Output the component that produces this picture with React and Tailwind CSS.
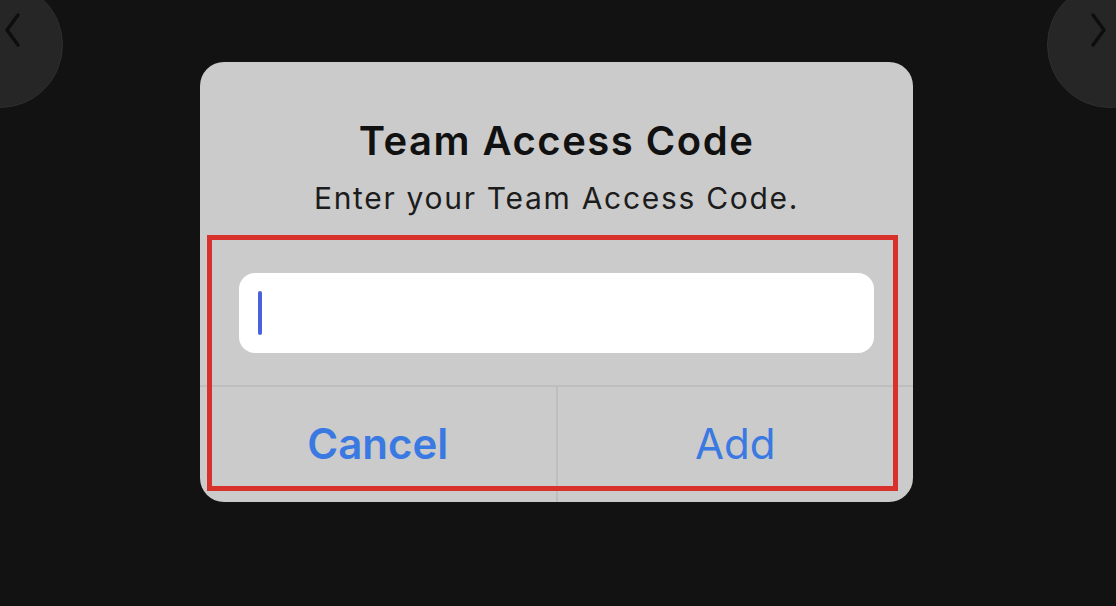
export default function App() {
  return (
    <div className="relative h-[606px] w-full overflow-hidden bg-[#121212] flex justify-center pt-[62px] font-['Inter',sans-serif]">
      {/* side nav buttons, partly off screen */}
      <div className="absolute left-[-63px] top-[-18px] h-[126px] w-[126px] rounded-full bg-[#262626] border border-[#2e2e2e]">
        <svg className="absolute left-[64px] top-[28px]" width="20" height="38" viewBox="0 0 20 38" fill="none">
          <path d="M16 4 L5 19 L16 34" stroke="#0e0e0e" strokeWidth="3.5" strokeLinecap="round" strokeLinejoin="round" />
        </svg>
      </div>
      <div className="absolute right-[-57px] top-[-18px] h-[126px] w-[126px] rounded-full bg-[#262626] border border-[#2e2e2e]">
        <svg className="absolute left-[41px] top-[28px]" width="20" height="38" viewBox="0 0 20 38" fill="none">
          <path d="M4 4 L15 19 L4 34" stroke="#0e0e0e" strokeWidth="3.5" strokeLinecap="round" strokeLinejoin="round" />
        </svg>
      </div>

      <div className="relative mr-[3px] w-[713px] h-[440px] rounded-[24px] bg-[#cbcbcb] flex flex-col items-center">
        <div className="mt-[56px] h-[46px] leading-[46px] text-[40px] font-semibold text-[#111] tracking-[1.5px]">
          Team Access Code
        </div>
        <div className="mt-[17px] h-[34px] leading-[34px] text-[30px] text-[#1c1c1c] tracking-[1.7px]">
          Enter your Team Access Code.
        </div>
        <div className="mt-[58px] w-[635px] h-[80px] rounded-[16px] bg-white flex items-center px-[19px]">
          <div className="w-[4px] h-[44px] rounded-full bg-[#4a62de]" />
        </div>
        <div className="mt-[32px] w-full flex-1 border-t-2 border-[#bebebe] flex">
          <button className="flex-1 flex items-center justify-center text-[42px] font-semibold text-[#3a79e2] pb-[2px]">
            Cancel
          </button>
          <div className="w-[2px] bg-[#bebebe]" />
          <button className="flex-1 flex items-center justify-center text-[42px] text-[#3a79e2] pb-[2px]">
            Add
          </button>
        </div>

        {/* annotation box */}
        <div className="absolute left-[7px] top-[173px] w-[691px] h-[256px] border-[5px] border-[#d8302a]" />
      </div>
    </div>
  )
}
